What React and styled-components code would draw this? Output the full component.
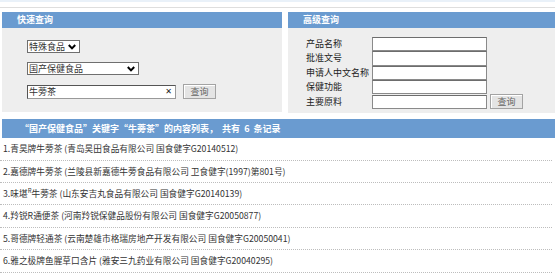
import React, { useState } from 'react';
import styled, { createGlobalStyle } from 'styled-components';

const GlobalStyle = createGlobalStyle`
  body {
    margin: 0;
    background: #fff;
    font-family: "Noto Sans CJK SC", "Liberation Sans", sans-serif;
  }
`;

const Page = styled.div`
  width: 555px;
  overflow: hidden;
`;

const TopStrip = styled.div`
  height: 2px;
  background: #e9f1f9;
`;

const TopRule = styled.div`
  height: 1px;
  margin-top: 5px;
  background: #dedede;
`;

const SearchRow = styled.div`
  display: flex;
  align-items: flex-start;
  gap: 6px;
  margin: 4px 0 0 2px;
`;

const Panel = styled.div`
  width: ${(p) => p.width || 'auto'};
  flex: ${(p) => (p.grow ? 1 : 'none')};
`;

const PanelHeader = styled.div`
  height: 16px;
  line-height: 16px;
  padding-left: ${(p) => p.indent || 15}px;
  background: #6a9bd0;
  color: #fff;
  font-size: 9px;
  font-weight: bold;
`;

const QuickBody = styled.div`
  background: #eeeeee;
  padding: 12px 0 13px 25px;
  display: flex;
  flex-direction: column;
  align-items: flex-start;
  gap: 9px;
`;

const SelectBox = styled.div`
  display: inline-flex;
  align-items: center;
  width: ${(p) => p.width}px;
  height: 13px;
  box-sizing: border-box;
  border: 1px solid #6f6f6f;
  background: #fff;
  padding-right: 3px;
`;

const NativeSelect = styled.select`
  appearance: none;
  flex: 1;
  min-width: 0;
  border: none;
  background: transparent;
  height: 11px;
  padding: 0 0 0 1px;
  font-size: 9px;
  line-height: 11px;
  color: #333;
  font-family: "Noto Sans CJK SC", sans-serif;
  outline: none;
`;

const Chevron = () => (
  <svg width="8" height="6" viewBox="0 0 8 6">
    <path d="M0.8 1 L4 4.4 L7.2 1" fill="none" stroke="#000" strokeWidth="2" />
  </svg>
);

const InlineRow = styled.div`
  display: flex;
  align-items: center;
  gap: 7px;
`;

const SearchBox = styled.div`
  display: flex;
  align-items: center;
  width: 149px;
  height: 14px;
  box-sizing: border-box;
  border: 1px solid #555;
  border-right-color: #999;
  border-bottom-color: #999;
  background: #fff;
  padding-right: 3px;
`;

const SearchInput = styled.input`
  flex: 1;
  min-width: 0;
  border: none;
  outline: none;
  padding: 0 0 0 1px;
  height: 12px;
  font-size: 9px;
  color: #333;
  font-family: "Noto Sans CJK SC", sans-serif;
  background: transparent;
`;

const ClearMark = styled.span`
  font-size: 8px;
  line-height: 8px;
  color: #222;
  font-family: "DejaVu Sans", sans-serif;
`;

const QueryButton = styled.button`
  width: 33px;
  height: 15px;
  padding: 0;
  border: 1px solid #a3a3a3;
  box-shadow: inset 1px 1px 0 #fff;
  background: #e4e4e4;
  color: #666;
  font-size: 9px;
  line-height: 12px;
  font-family: "Noto Sans CJK SC", sans-serif;
`;

const AdvancedBody = styled.div`
  background: #eeeeee;
  padding: 9px 0 4px 18px;
  display: grid;
  grid-template-columns: 63px 115px auto;
  column-gap: 3px;
  align-items: center;
`;

const FieldLabel = styled.label`
  font-size: 9px;
  color: #222;
  line-height: 14px;
  white-space: nowrap;
`;

const FieldInput = styled.input`
  width: 115px;
  height: 14.3px;
  box-sizing: border-box;
  border: 1px solid #8a8a8a;
  border-top-color: #6d6d6d;
  background: #fff;
  padding: 0 2px;
  font-size: 9px;
  outline: none;
`;

const ResultHeader = styled.div`
  height: 19px;
  line-height: 19px;
  margin: 6px 0 0 2px;
  padding-left: 18px;
  background: #6a9bd0;
  color: #fff;
  font-size: 9px;
  font-weight: bold;
  white-space: pre;
`;

const ResultList = styled.ul`
  list-style: none;
  margin: 0;
  padding: 0;
`;

const ResultRow = styled.li`
  height: 21.4px;
  line-height: 22px;
  border-bottom: 1px dotted #bdbdbd;
  padding-left: 3px;
  margin-right: 3px;
  font-size: 8.7px;
  color: #333;
  white-space: nowrap;
`;

const Mark = styled.sup`
  font-size: 6px;
  line-height: 0;
`;

const fields = ['产品名称', '批准文号', '申请人中文名称', '保健功能', '主要原料'];

export default function App() {
  const [kind, setKind] = useState('特殊食品');
  const [cat, setCat] = useState('国产保健食品');
  const [keyword, setKeyword] = useState('牛蒡茶');

  return (
    <Page>
      <GlobalStyle />
      <TopStrip />
      <TopRule />
      <SearchRow>
        <Panel width="280px">
          <PanelHeader>快速查询</PanelHeader>
          <QuickBody>
            <SelectBox width={53}>
              <NativeSelect value={kind} onChange={(e) => setKind(e.target.value)}>
                <option>特殊食品</option>
              </NativeSelect>
              <Chevron />
            </SelectBox>
            <SelectBox width={112}>
              <NativeSelect value={cat} onChange={(e) => setCat(e.target.value)}>
                <option>国产保健食品</option>
              </NativeSelect>
              <Chevron />
            </SelectBox>
            <InlineRow>
              <SearchBox>
                <SearchInput value={keyword} onChange={(e) => setKeyword(e.target.value)} />
                <ClearMark>✕</ClearMark>
              </SearchBox>
              <QueryButton>查询</QueryButton>
            </InlineRow>
          </QuickBody>
        </Panel>
        <Panel grow>
          <PanelHeader indent={15}>高级查询</PanelHeader>
          <AdvancedBody>
            {fields.map((f, i) => (
              <React.Fragment key={f}>
                <FieldLabel>{f}</FieldLabel>
                <FieldInput />
                {i === fields.length - 1 ? <QueryButton>查询</QueryButton> : <span />}
              </React.Fragment>
            ))}
          </AdvancedBody>
        </Panel>
      </SearchRow>
      <ResultHeader>“国产保健食品”关键字“牛蒡茶”的内容列表，  共有  6  条记录</ResultHeader>
      <ResultList>
        <ResultRow>1.青昊牌牛蒡茶 (青岛昊田食品有限公司 国食健字G20140512)</ResultRow>
        <ResultRow>2.嘉德牌牛蒡茶 (兰陵县新嘉德牛蒡食品有限公司 卫食健字(1997)第801号)</ResultRow>
        <ResultRow>3.味堪<Mark>R</Mark>牛蒡茶 (山东安吉丸食品有限公司 国食健字G20140139)</ResultRow>
        <ResultRow>4.羚锐R通便茶 (河南羚锐保健品股份有限公司 国食健字G20050877)</ResultRow>
        <ResultRow>5.哥德牌轻通茶 (云南楚雄市格瑞房地产开发有限公司 国食健字G20050041)</ResultRow>
        <ResultRow>6.雅之极牌鱼腥草口含片 (雅安三九药业有限公司 国食健字G20040295)</ResultRow>
      </ResultList>
    </Page>
  );
}
